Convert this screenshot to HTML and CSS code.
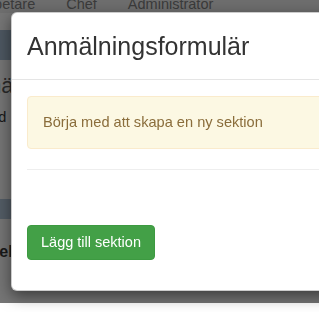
FILE: index.html
```html
<!DOCTYPE html>
<html lang="sv">
<head>
  <meta charset="UTF-8">
  <meta name="viewport" content="width=device-width, initial-scale=1.0">
  <title>Anmälningsformulär</title>
  <link rel="stylesheet" href="styles.css">
</head>

<body>
  <div class="sida">
    <nav class="toppmeny">
      <a href="#">Medarbetare</a>
      <a href="#">Chef</a>
      <a href="#">Administrator</a>
    </nav>

    <div class="innehall">
      <div class="rubrikrad"></div>
      <h2 class="sidrubrik">Anmä</h2>
      <p class="ingress">med</p>
      <div class="tabellhuvud"></div>
      <p class="fet">Regel</p>
    </div>
  </div>

  <div class="bakgrund"></div>

  <div class="modal">
    <div class="modal-header">
      <h4 class="modal-titel">Anmälningsformulär</h4>
    </div>
    <div class="modal-body">
      <div class="alert">Börja med att skapa en ny sektion</div>
      <hr>
      <button class="btn-success">Lägg till sektion</button>
    </div>
  </div>
</body>
</html>
```

FILE: styles.css
```css
html, body {
  margin: 0;
  padding: 0;
  height: 100%;
  overflow: hidden;
  background-color: #fff;
  font-family: "Liberation Sans", Arial, sans-serif;
  color: #333;
}

/* sidan bakom modalen */
.sida {
  height: 303px;
  background-color: #eaeaea;
  overflow: hidden;
}

.toppmeny {
  display: flex;
  gap: 31px;
  height: 12px;
  margin-left: -47px;
  background-color: #ddd;
  font-size: 14.5px;
  line-height: 12px;
  padding-top: 1px;
}

.toppmeny a {
  color: #777;
  text-decoration: none;
  white-space: nowrap;
  margin-top: -3px;
}

.innehall {
  display: flex;
  flex-direction: column;
}

.rubrikrad {
  height: 30px;
  margin-top: 17px;
  background-color: #9aaec2;
}

.sidrubrik {
  margin: 13px 0 0 -44px;
  font-size: 22px;
  font-weight: normal;
  line-height: 26px;
  color: #555;
  white-space: nowrap;
}

.ingress {
  margin: 10px 0 0 -22px;
  font-size: 14.5px;
  color: #333;
  white-space: nowrap;
}

.tabellhuvud {
  height: 20px;
  margin-top: 74px;
  background-color: #a7b8ca;
}

.fet {
  margin: 24px 0 0 -31px;
  font-size: 16px;
  font-weight: bold;
  white-space: nowrap;
}

.bakgrund {
  position: fixed;
  left: 0;
  top: 0;
  width: 100%;
  height: 303px;
  background-color: rgba(0, 0, 0, 0.5);
}

/* modalen */
.modal {
  position: absolute;
  left: 11px;
  top: 12px;
  width: 540px;
  background-color: #fff;
  border: 1px solid rgba(0, 0, 0, 0.2);
  border-radius: 6px;
  box-shadow: 0 5px 15px rgba(0, 0, 0, 0.5);
}

.modal-header {
  padding: 14.5px 15px 15.5px;
  border-bottom: 1px solid #e5e5e5;
}

.modal-titel {
  margin: 0;
  font-size: 25px;
  font-weight: normal;
  line-height: 36px;
  color: #333;
}

.modal-body {
  padding: 16px 15px 30px;
}

.alert {
  padding: 15px;
  margin-bottom: 20px;
  background-color: #fcf8e3;
  border: 1px solid #faebcc;
  border-radius: 4px;
  color: #8a6d3b;
  font-size: 14.6px;
  line-height: 21px;
}

hr {
  margin: 0 0 55px;
  border: 0;
  border-top: 1px solid #eee;
}

.btn-success {
  display: block;
  padding: 6px 13px;
  font-family: "Liberation Sans", Arial, sans-serif;
  font-size: 14.5px;
  line-height: 21px;
  color: #fff;
  background-color: #43a047;
  border: 1px solid #3d9a41;
  border-radius: 4px;
  cursor: pointer;
}
```
